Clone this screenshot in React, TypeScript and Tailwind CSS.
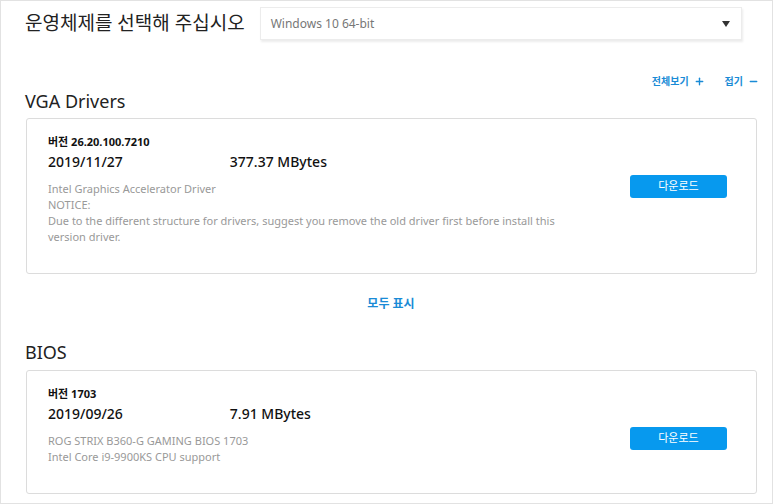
import { Plus, Minus } from 'lucide-react';

const font = { fontFamily: '"Noto Sans", "Noto Sans CJK KR", sans-serif' };

type Driver = {
    version: string;
    date: string;
    size: string;
    lines: string[];
};

const vga: Driver = {
    version: '26.20.100.7210',
    date: '2019/11/27',
    size: '377.37 MBytes',
    lines: [
        'Intel Graphics Accelerator Driver',
        'NOTICE:',
        'Due to the different structure for drivers, suggest you remove the old driver first before install this version driver.',
    ],
};

const bios: Driver = {
    version: '1703',
    date: '2019/09/26',
    size: '7.91 MBytes',
    lines: ['ROG STRIX B360-G GAMING BIOS 1703', 'Intel Core i9-9900KS CPU support'],
};

function DriverCard({ item }: { item: Driver }) {
    return (
        <div className="flex items-start rounded-[3px] border border-[#dcdcdc] bg-white pl-[21px] pr-[29px] pt-[15px] pb-[28px]">
            <div className="flex-1">
                <div className="text-[11px] font-bold leading-[16px] text-[#111]">버전 {item.version}</div>
                <div className="mt-[2px] flex text-[14px] font-medium leading-[20px] text-[#111]">
                    <span>{item.date}</span>
                    <span className="ml-[107px]">{item.size}</span>
                </div>
                <div className="mt-[9px] w-[518px] text-[11px] leading-[16px] text-[#999]">
                    {item.lines.map((l) => (
                        <div key={l}>{l}</div>
                    ))}
                </div>
            </div>
            <button className="mt-[41px] h-[23px] w-[97px] rounded-[3px] bg-[#0799ee] text-[11px] text-white">
                다운로드
            </button>
        </div>
    );
}

export default function App() {
    return (
        <div style={font} className="h-[504px] w-[773px] overflow-hidden border border-[#e2e2e2] bg-white pl-[24px] pr-[15px]">
            {/* OS select */}
            <div className="mt-[6px] flex items-center">
                <h1 className="text-[19px] leading-[33px] text-[#222]">운영체제를 선택해 주십시오</h1>
                <div className="ml-[15px] flex h-[33px] w-[482px] items-center justify-between border border-[#ececec] pl-[10px] pr-[11px] shadow-[1px_2px_2px_rgba(0,0,0,0.08)]">
                    <span className="text-[12px] text-[#777]">Windows 10 64-bit</span>
                    <svg width="8" height="6" viewBox="0 0 8 6">
                        <path d="M0 0 L8 0 L4 6 Z" fill="#333" />
                    </svg>
                </div>
            </div>

            <div className="mt-[34px] -mr-[2px] flex justify-end gap-[20px] text-[10px] font-bold leading-[14px] text-[#1a8bd6]">
                <span className="flex items-center gap-[5px]">
                    전체보기 <Plus size={11} strokeWidth={3} />
                </span>
                <span className="flex items-center gap-[5px]">
                    접기 <Minus size={11} strokeWidth={3} />
                </span>
            </div>

            <h2 className="mt-[1px] text-[18px] leading-[24px] text-[#222]">VGA Drivers</h2>
            <div className="mt-[5px] pl-[1px]">
                <DriverCard item={vga} />
            </div>

            <div className="mt-[20px] text-center text-[12px] font-bold leading-[20px] text-[#1a8bd6]">모두 표시</div>

            <h2 className="mt-[26px] text-[18px] leading-[24px] text-[#222]">BIOS</h2>
            <div className="mt-[6px] pl-[1px]">
                <DriverCard item={bios} />
            </div>
        </div>
    );
}
